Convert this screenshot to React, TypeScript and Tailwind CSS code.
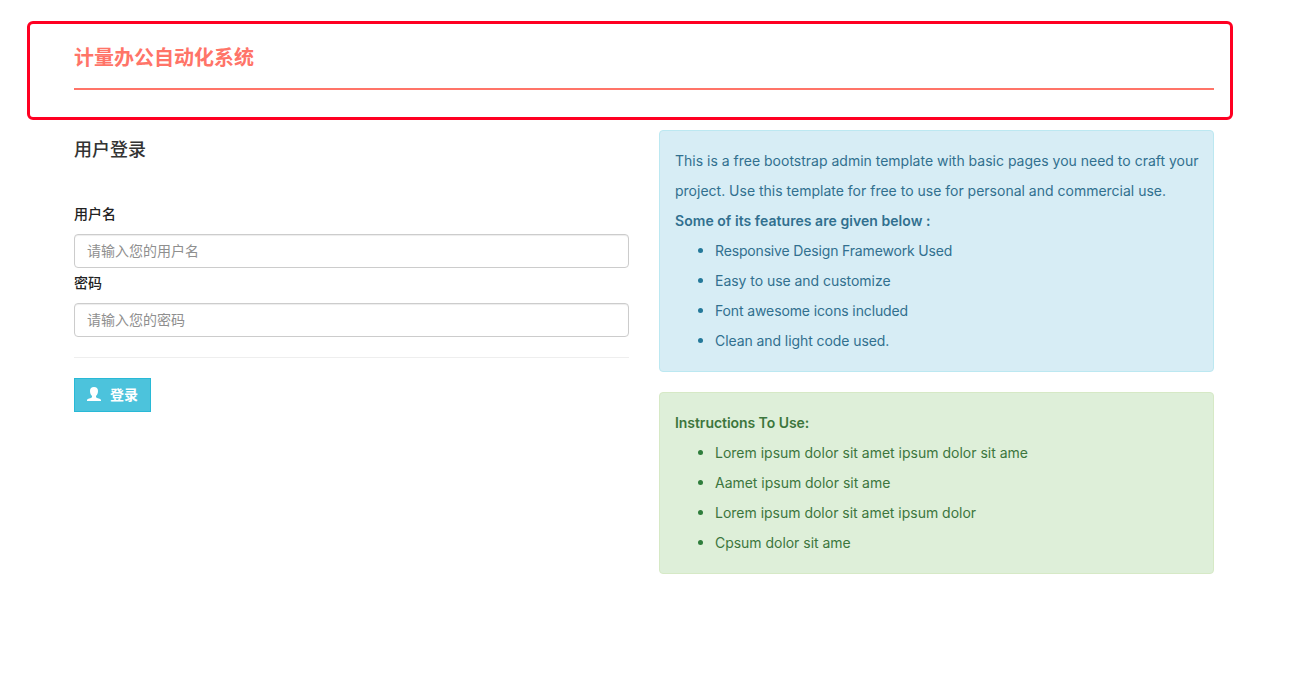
const features = [
  { text: "Responsive Design Framework Used", style: "tracking-[-0.16px]" },
  { text: "Easy to use and customize", style: "tracking-[-0.04px]" },
  { text: "Font awesome icons included", style: "tracking-[-0.12px]" },
  { text: "Clean and light code used.", style: "tracking-[-0.08px]" },
];

const instructions = [
  { text: "Lorem ipsum dolor sit amet ipsum dolor sit ame", style: "tracking-normal" },
  { text: "Aamet ipsum dolor sit ame", style: "tracking-[-0.02px]" },
  { text: "Lorem ipsum dolor sit amet ipsum dolor", style: "tracking-[-0.01px]" },
  { text: "Cpsum dolor sit ame", style: "tracking-[-0.03px]" },
];

function BulletList({ items, dot }: { items: { text: string; style: string }[]; dot: string }) {
  return (
    <ul>
      {items.map((item) => (
        <li key={item.text} className="flex h-[30px] items-center pl-[23px]">
          <span className={`mr-3 mb-px size-[5px] rounded-full ${dot}`} />
          <span className={`whitespace-nowrap ${item.style}`}>{item.text}</span>
        </li>
      ))}
    </ul>
  );
}

function Field({ id, label, placeholder, type }: { id: string; label: string; placeholder: string; type: string }) {
  return (
    <div className="h-[69px]">
      <label htmlFor={id} className="block h-[30px] text-sm leading-5 font-medium text-[#222]">
        {label}
      </label>
      <input
        id={id}
        type={type}
        placeholder={placeholder}
        className="block h-[34px] w-full rounded border border-[#ccc] bg-white px-3 pb-px text-sm text-[#555] shadow-[inset_0_1px_1px_rgba(0,0,0,0.075)] outline-none placeholder:text-[#8f8f8f]"
      />
    </div>
  );
}

export default function App() {
  return (
    <div className="flex h-[681px] w-[1293px] flex-col overflow-hidden bg-white pt-[21px] pl-[27px] font-['Liberation_Sans','Noto_Sans_CJK_SC',sans-serif] text-sm text-[#333]">
      <header className="h-[99px] w-[1206px] shrink-0 rounded-[6px] border-[3px] border-[#ff0022] px-4 pl-11">
        <h1 className="h-[66px] w-[1140px] border-b-2 border-[#ff7468] pt-[19px] text-[20px] leading-[30px] font-bold text-[#ff7468]">
          计量办公自动化系统
        </h1>
      </header>
      <main className="mt-[10px] ml-[47px] grid w-[1140px] grid-cols-2 gap-[30px]">
        <section>
          <h2 className="pt-[10px] text-[18px] leading-5 font-medium text-[#333]">用户登录</h2>
          <form className="pt-[44px]">
            <Field id="username" label="用户名" placeholder="请输入您的用户名" type="text" />
            <Field id="password" label="密码" placeholder="请输入您的密码" type="password" />
            <hr className="mt-[15px] border-[#eee]" />
            <button
              type="button"
              className="mt-5 flex h-[34px] w-[77px] items-center border border-[#28b9d6] bg-[#4cc3dc] pl-3 text-sm font-bold text-white"
            >
              <svg viewBox="0 0 14 14" className="mb-[2px] size-[14px] fill-current" aria-hidden="true">
                <path d="M7 0C4.400 0 3 1.400 3 4c0 2.300.800 4 2 4.900v1.300C4.300 11.200 0 11.600 0 13v1h14v-1c0-1.400-4.300-1.800-5-2.800V8.900c1.200-.900 2-2.600 2-4.900C11 1.400 9.600 0 7 0Z" />
              </svg>
              <span className="ml-[9px]">登录</span>
            </button>
          </form>
        </section>
        <div className="flex flex-col gap-5 font-[Inter,sans-serif]">
          <section className="h-[242px] rounded border border-[#bce8f1] bg-[#d7edf5] p-[15px] leading-[30px] text-[#31708f]">
            <p className="whitespace-nowrap">
              This is a free bootstrap admin template with basic pages you need to craft your
              <br />
              project. Use this template for free to use for personal and commercial use.
            </p>
            <h3 className="font-semibold tracking-[0.05px]">Some of its features are given below :</h3>
            <BulletList items={features} dot="bg-[#24799a]" />
          </section>
          <section className="h-[182px] rounded border border-[#d6e9c6] bg-[#deefd9] p-[15px] leading-[30px] text-[#3c763d]">
            <h3 className="font-semibold tracking-[-0.05px]">Instructions To Use:</h3>
            <BulletList items={instructions} dot="bg-[#2f7d3c]" />
          </section>
        </div>
      </main>
    </div>
  );
}
